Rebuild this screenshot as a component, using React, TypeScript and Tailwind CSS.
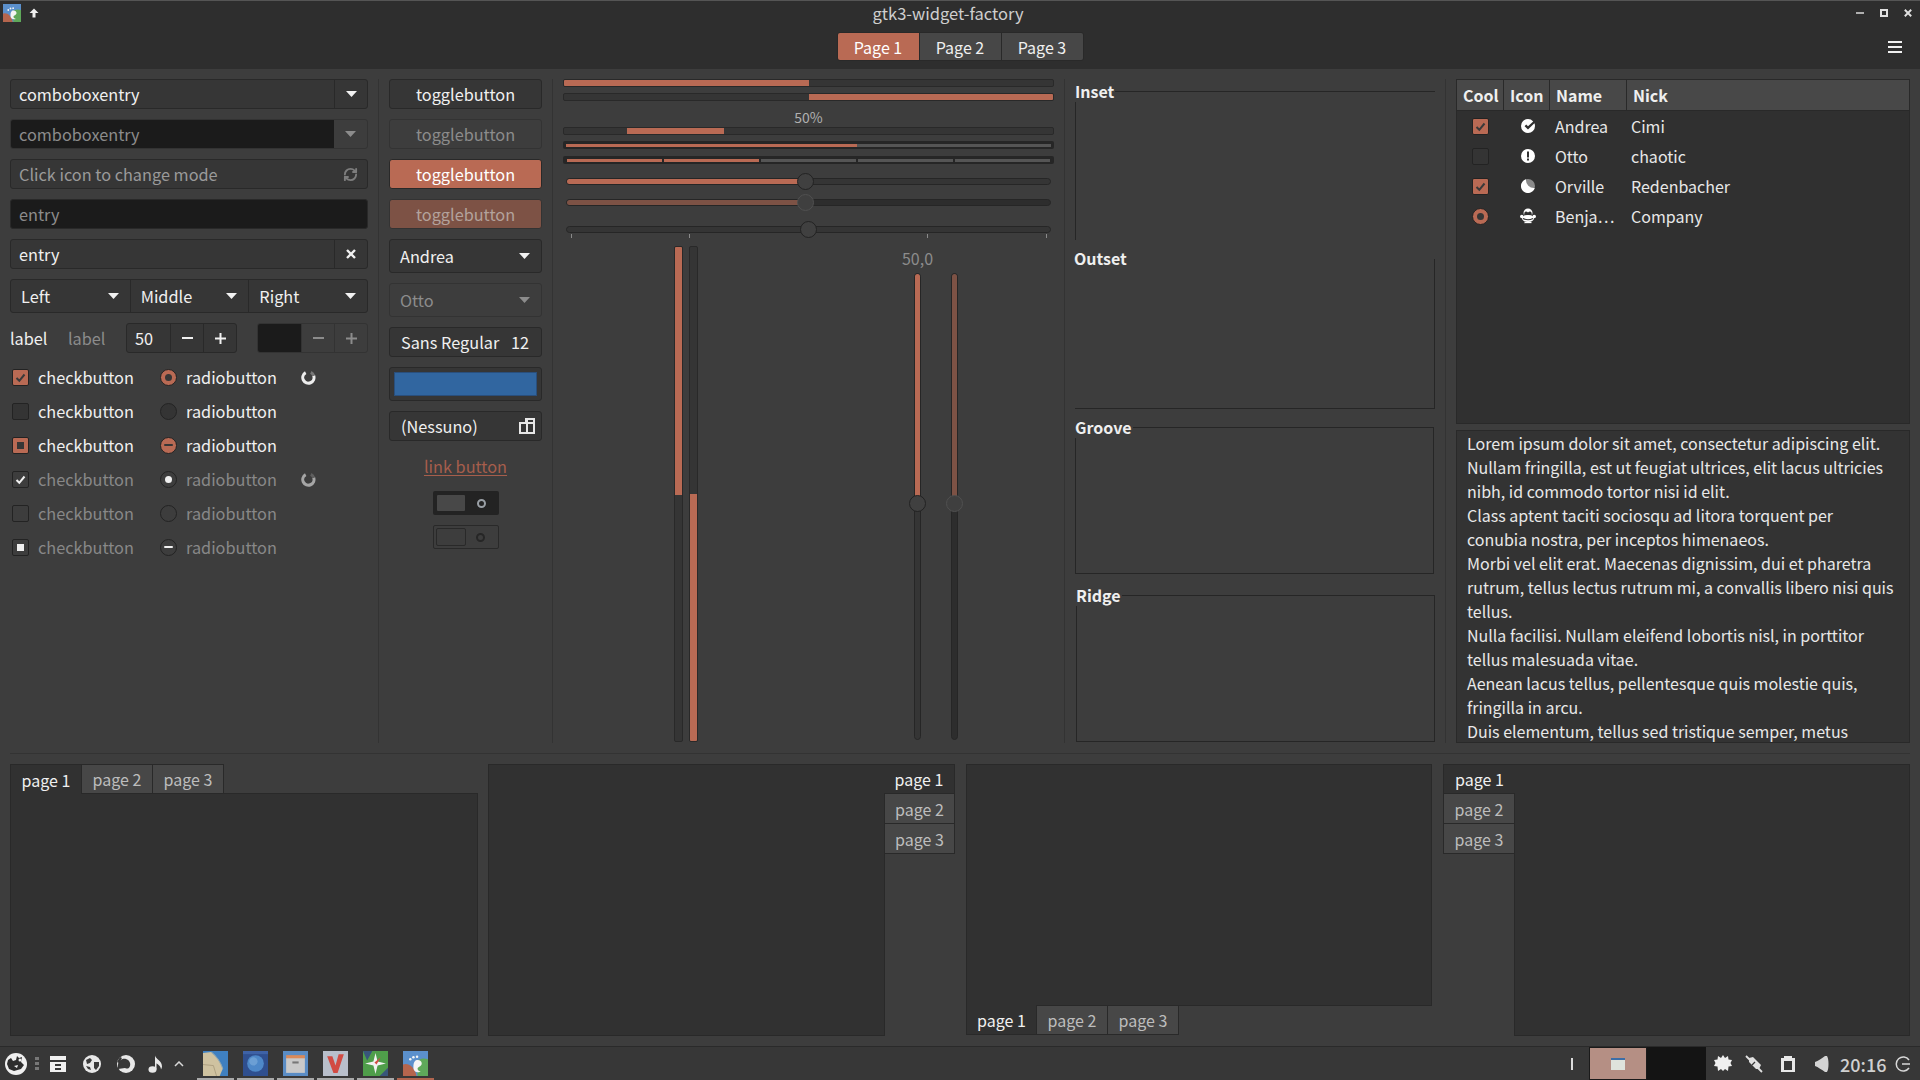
import React from 'react';
import { RefreshCw } from 'lucide-react';

const accent = 'bg-[#b96a54]';

const Arrow = ({ dim }: { dim?: boolean }) => (
  <svg viewBox="0 0 11 6" className="w-[11px] h-[6px]">
    <path d="M0 0h11L5.5 6z" fill={dim ? '#8c8c8c' : '#f2f2f2'} />
  </svg>
);

const Cross = ({ size = 10 }: { size?: number }) => (
  <svg width={size} height={size} viewBox="0 0 10 10">
    <path d="M1 1l8 8M9 1l-8 8" stroke="currentColor" strokeWidth="2.400" fill="none" />
  </svg>
);

const MinusMark = ({ size = 11 }: { size?: number }) => (
  <svg width={size} height="2" viewBox="0 0 11 2">
    <rect width="11" height="2" fill="currentColor" />
  </svg>
);

const PlusMark = () => (
  <svg width="11" height="11" viewBox="0 0 11 11">
    <path d="M0 4.500h11v2H0zM4.500 0h2v11h-2z" fill="currentColor" />
  </svg>
);

const Check = ({ color = '#3a3a3a' }: { color?: string }) => (
  <svg viewBox="0 0 17 17" className="w-[17px] h-[17px]">
    <path d="M4.500 9l2.800 2.800L12.500 5.500" fill="none" stroke={color} strokeWidth="2" />
  </svg>
);

type Mark = 'on' | 'off' | 'mixed';

const CheckBox = ({ mark, off }: { mark: Mark; off?: boolean }) => {
  if (off) {
    return (
      <div className="w-[17px] h-[17px] rounded-[2px] border border-[#232323] bg-[#3d3d3d] flex items-center justify-center overflow-hidden">
        {mark === 'on' && <div className="shrink-0"><Check color="#f0f0f0" /></div>}
        {mark === 'mixed' && <div className="w-[7px] h-[7px] bg-[#f0f0f0]" />}
      </div>
    );
  }
  return (
    <div className={`w-[17px] h-[17px] rounded-[2px] border border-[#232323] flex items-center justify-center overflow-hidden ${mark === 'off' ? 'bg-[#343434]' : accent}`}>
      {mark === 'on' && <div className="shrink-0"><Check /></div>}
      {mark === 'mixed' && <div className="w-[7px] h-[7px] bg-[#363636]" />}
    </div>
  );
};

const Radio = ({ mark, off }: { mark: Mark; off?: boolean }) => {
  const fill = off ? 'bg-[#3d3d3d]' : mark === 'off' ? 'bg-[#343434]' : accent;
  const dot = off ? 'bg-[#f0f0f0]' : 'bg-[#363636]';
  return (
    <div className={`w-[17px] h-[17px] rounded-full border border-[#232323] flex items-center justify-center ${fill}`}>
      {mark === 'on' && <div className={`w-[7px] h-[7px] rounded-full ${dot}`} />}
      {mark === 'mixed' && <div className={`w-[9px] h-[2px] rounded-[1px] ${dot}`} />}
    </div>
  );
};

const Spinner = () => (
  <svg viewBox="0 0 16 16" className="w-[15px] h-[15px]">
    <path d="M13.500 6A6 6 0 1 1 5 2.800" fill="none" stroke="#ededed" strokeWidth="3.200" />
    <path d="M10.500 2.500a6 6 0 0 1 3 3.500" fill="none" stroke="#777777" strokeWidth="3.200" />
  </svg>
);

const CheckRow = ({ c, r, off, spin }: { c: Mark; r: Mark; off?: boolean; spin?: boolean }) => (
  <div className={`grid grid-cols-[150px_131px_auto] h-[34px] items-center ${off ? 'text-[#888888]' : ''}`}>
    <div className="flex items-center pl-[2px] gap-[9px]">
      <CheckBox mark={c} off={off} />
      <span>checkbutton</span>
    </div>
    <div className="flex items-center gap-[9px]">
      <Radio mark={r} off={off} />
      <span>radiobutton</span>
    </div>
    <div className={`pl-[10px] ${off ? 'opacity-60' : ''}`}>{spin && <Spinner />}</div>
  </div>
);

const Toggle = ({ cls }: { cls: string }) => (
  <div className={`h-[30px] rounded-[3px] border flex items-center justify-center ${cls}`}>togglebutton</div>
);

const Bar = ({ children }: { children?: React.ReactNode }) => (
  <div className="flex h-[8px] rounded-[2px] border border-[#292929] bg-[#353535] overflow-hidden">{children}</div>
);

const HSlider = ({ knob, fill, off }: { knob?: string; fill?: string; off?: boolean }) => (
  <div className={`relative h-[7px] mx-[3px] rounded-full border border-[#262626] ${off ? 'bg-[#2d2d2d]' : 'bg-[#353535]'}`}>
    {fill && <div className={`h-full rounded-l-full ${fill} ${off ? 'bg-[#7d5245]' : accent}`} />}
    <div className={`absolute top-[-6px] w-[17px] h-[17px] rounded-full border ${knob} ${off ? 'bg-[#3f3f3f] border-[#505050]' : 'bg-[#404040] border-[#222222]'}`} />
  </div>
);

const Frame = ({ label, cls }: { label: string; cls: string }) => (
  <div className={`relative border-[#262626] ${cls}`}>
    <div className="absolute left-[-1px] top-[-12px] pr-[1px] h-[22px] leading-[22px] bg-[#3d3d3d] font-semibold text-[#efefef]">{label}</div>
  </div>
);

const Tab = ({ label, active, cls, w = 'w-[71px]' }: { label: string; active?: boolean; cls?: string; w?: string }) => (
  <div className={`${w} h-[30px] flex items-center justify-center border-[#292929] ${active ? 'bg-[#313131] text-[#f0f0f0]' : 'bg-[#474747] text-[#bdbdbd]'} ${cls ?? ''}`}>
    {label}
  </div>
);

const GimpIcon = ({ size }: { size: number }) => (
  <svg width={size} height={size} viewBox="0 0 24 24">
    <rect width="24" height="24" fill="#5b90cc" />
    <path d="M0 24V13c5-2 11 2 13 11z" fill="#b5654d" />
    <path d="M24 24V8C19 6 13 8 11 13c2 3 3 7 3 11z" fill="#5fa85a" />
    <path d="M12 9c3-1 6 0 6 3 0 3-4 3-4 5 0 2 2 2 3 3-3 1-7 0-7-4 0-3 0-5 2-7z" fill="#f4f4f4" />
    <circle cx="7" cy="8" r="1.200" fill="#f4f4f4" />
    <circle cx="10" cy="6" r="1.200" fill="#f4f4f4" />
    <circle cx="13.500" cy="5.500" r="1.200" fill="#f4f4f4" />
  </svg>
);

const MapIcon = () => (
  <svg width="25" height="25" viewBox="0 0 24 24">
    <rect width="24" height="24" fill="#3f80c0" />
    <path d="M0 2l8-1c5 4 9 10 11 16l-3 7H2L0 24z" fill="#cfc2a0" />
    <path d="M8 1c5 4 9 10 11 16" fill="none" stroke="#8fa6b0" strokeWidth="1" />
    <path d="M0 13l10 1 3 10" fill="none" stroke="#a89a7c" strokeWidth="0.800" />
  </svg>
);

const OrbIcon = () => (
  <svg width="25" height="25" viewBox="0 0 24 24">
    <rect width="24" height="24" fill="#2f4f8f" />
    <rect width="24" height="3" fill="#3e62a6" />
    <circle cx="12" cy="12" r="8" fill="#4e88c8" />
    <circle cx="10" cy="10" r="4" fill="#79a9d8" opacity="0.700" />
  </svg>
);

const BoxIcon = () => (
  <svg width="25" height="25" viewBox="0 0 24 24">
    <rect width="24" height="24" fill="#5a8cc4" />
    <rect x="3" y="4" width="18" height="4" fill="#d98a5a" />
    <rect x="3" y="7" width="18" height="14" fill="#c9c9c9" />
    <rect x="9" y="10" width="6" height="2" fill="#777777" />
  </svg>
);

const VIcon = () => (
  <svg width="25" height="25" viewBox="0 0 24 24">
    <rect width="24" height="24" fill="#b9bfcb" />
    <path d="M4 5h5l3 9 3-11h5l-6 18h-4z" fill="#d24b43" />
  </svg>
);

const CompassIcon = () => (
  <svg width="25" height="25" viewBox="0 0 24 24">
    <rect width="24" height="24" fill="#4f9e4a" />
    <path d="M0 0h9L4 9zM24 24h-8l8-8z" fill="#38567a" />
    <path d="M12 2l2 8 8 2-8 2-2 8-2-8-8-2 8-2z" fill="#f2f2f2" />
    <path d="M17 6l-6 5 2 2z" fill="#d24b43" />
  </svg>
);

const tasks = [
  { icon: <MapIcon />, bar: 'bg-[#a9a9a9]' },
  { icon: <OrbIcon />, bar: 'bg-[#a9a9a9]' },
  { icon: <BoxIcon />, bar: 'bg-[#a9a9a9]' },
  { icon: <VIcon />, bar: 'bg-[#a9a9a9]' },
  { icon: <CompassIcon />, bar: 'bg-[#a9a9a9]' },
  { icon: <GimpIcon size={25} />, bar: 'bg-[#b0654f]' },
];

const lorem = [
  'Lorem ipsum dolor sit amet, consectetur adipiscing elit.',
  'Nullam fringilla, est ut feugiat ultrices, elit lacus ultricies',
  'nibh, id commodo tortor nisi id elit.',
  'Class aptent taciti sociosqu ad litora torquent per',
  'conubia nostra, per inceptos himenaeos.',
  'Morbi vel elit erat. Maecenas dignissim, dui et pharetra',
  'rutrum, tellus lectus rutrum mi, a convallis libero nisi quis',
  'tellus.',
  'Nulla facilisi. Nullam eleifend lobortis nisl, in porttitor',
  'tellus malesuada vitae.',
  'Aenean lacus tellus, pellentesque quis molestie quis,',
  'fringilla in arcu.',
  'Duis elementum, tellus sed tristique semper, metus',
];

const treeRows = [
  {
    cool: <CheckBox mark="on" />,
    icon: <path fillRule="evenodd" d="M8 1a7 7 0 1 0 7 7 7 7 0 0 0-.6-2.800L8 11.500 4.600 8.200l1.600-1.600L8 8.300 13.200 3.400A7 7 0 0 0 8 1z" fill="#fff" />,
    name: 'Andrea',
    nick: 'Cimi',
  },
  {
    cool: <CheckBox mark="off" />,
    icon: <path fillRule="evenodd" d="M8 1a7 7 0 1 0 0 14A7 7 0 0 0 8 1zM7 3.500h2V9.500H7zM7 10.500h2v2H7z" fill="#fff" />,
    name: 'Otto',
    nick: 'chaotic',
  },
  {
    cool: <CheckBox mark="on" />,
    icon: (
      <>
        <circle cx="8" cy="8" r="7" fill="#8a8a8a" />
        <path d="M6 1.300A7 7 0 1 0 14.700 10 8 8 0 0 1 6 1.300z" fill="#fff" />
      </>
    ),
    name: 'Orville',
    nick: 'Redenbacher',
  },
  {
    cool: <Radio mark="on" />,
    icon: (
      <>
        <circle cx="8" cy="5" r="4.500" fill="#fff" />
        <circle cx="1.800" cy="8.500" r="1.800" fill="#fff" />
        <circle cx="14.200" cy="8.500" r="1.800" fill="#fff" />
        <path d="M4.500 4.500c1-1.500 2.500-.8 3.500 0 1-.8 2.500-1.500 3.500 0l.5 3h-8z" fill="#303030" />
        <ellipse cx="8" cy="10.500" rx="6" ry="3.500" fill="#fff" />
        <path d="M3 10.500c3 1.500 7 1.500 10 0" fill="none" stroke="#303030" strokeWidth="1.100" />
        <path d="M4.500 14.500h7" stroke="#fff" strokeWidth="1.300" />
      </>
    ),
    name: 'Benja⋯',
    nick: 'Company',
  },
];

export default function App() {
  return (
    <div className="w-[1920px] h-[1080px] overflow-hidden flex flex-col bg-[#3d3d3d] text-[#f0f0f0] text-[16px] font-['Noto_Sans_CJK_SC','Noto_Sans',sans-serif]">
      {/* title bar + switcher */}
      <div className="h-[69px] shrink-0 bg-[#2e2e2e] border-t border-[#555555]">
        <div className="h-[24px] grid grid-cols-[1fr_auto_1fr] items-center">
          <div className="flex items-center pl-[3px] gap-[8px]">
            <GimpIcon size={18} />
            <svg viewBox="0 0 10 10" className="w-[10px] h-[10px]">
              <path d="M5 0.500L9.500 5H6.500V9.500H3.500V5H0.500z" fill="#f0f0f0" />
            </svg>
          </div>
          <div className="mr-[24px] text-[16.500px] text-[#cfcfcf] leading-[24px]">gtk3-widget-factory</div>
          <div className="flex justify-end items-center pr-[8px] gap-[16px] text-[#e0e0e0]">
            <MinusMark size={8} />
            <div className="w-[8px] h-[8px] border-2 border-[#e0e0e0]" />
            <Cross size={8} />
          </div>
        </div>
        <div className="h-[44px] grid grid-cols-[1fr_auto_1fr] items-start pt-[7px]">
          <div />
          <div className="flex h-[29px] rounded-[3px] border border-[#292929] overflow-hidden">
            <div className={`w-[81px] flex items-center justify-center ${accent} text-white`}>Page 1</div>
            <div className="w-[82px] flex items-center justify-center bg-[#474747] border-l border-[#292929]">Page 2</div>
            <div className="w-[82px] flex items-center justify-center bg-[#474747] border-l border-[#292929]">Page 3</div>
          </div>
          <div className="flex justify-end pr-[18px] pt-[9px]">
            <div className="w-[14px] h-[12px] flex flex-col justify-between">
              <div className="h-[2px] bg-[#f0f0f0]" />
              <div className="h-[2px] bg-[#f0f0f0]" />
              <div className="h-[2px] bg-[#f0f0f0]" />
            </div>
          </div>
        </div>
      </div>

      <div className="flex-1 flex flex-col px-[10px] pt-[10px] pb-[10px]">
        {/* widget columns */}
        <div className="h-[664px] flex gap-[10px]">
          {/* entries */}
          <div className="w-[358px] shrink-0 flex flex-col gap-[10px] text-[16.300px]">
            <div className="h-[30px] rounded-[3px] border border-[#292929] bg-[#363636] flex items-center leading-none">
              <div className="flex-1 pl-[8px]">comboboxentry</div>
              <div className="w-[33px] h-full border-l border-[#292929] flex items-center justify-center"><Arrow /></div>
            </div>
            <div className="h-[30px] rounded-[3px] border border-[#333333] bg-[#3d3d3d] flex items-center overflow-hidden text-[#8c8c8c]">
              <div className="flex-1 h-full pl-[8px] bg-[#1b1b1b] flex items-center">comboboxentry</div>
              <div className="w-[33px] flex items-center justify-center"><Arrow dim /></div>
            </div>
            <div className="h-[30px] rounded-[3px] border border-[#292929] bg-[#363636] flex items-center text-[#9a9a9a]">
              <div className="flex-1 pl-[8px]">Click icon to change mode</div>
              <div className="w-[33px] flex items-center justify-center text-[#7d7d7d]"><RefreshCw size={15} strokeWidth={3} /></div>
            </div>
            <div className="h-[30px] rounded-[3px] border border-[#292929] bg-[#1b1b1b] flex items-center pl-[8px] text-[#8c8c8c]">entry</div>
            <div className="h-[30px] rounded-[3px] border border-[#292929] bg-[#363636] flex items-center">
              <div className="flex-1 pl-[8px]">entry</div>
              <div className="w-[33px] h-full border-l border-[#292929] flex items-center justify-center"><Cross /></div>
            </div>
            <div className="h-[34px] rounded-[3px] border border-[#292929] bg-[#363636] grid grid-cols-3">
              {['Left', 'Middle', 'Right'].map((t, i) => (
                <div key={t} className={`flex items-center justify-between pl-[10px] pr-[11px] border-[#292929] ${i > 0 ? 'border-l' : ''}`}>
                  <span>{t}</span>
                  <Arrow />
                </div>
              ))}
            </div>
            <div className="h-[30px] flex items-center">
              <div className="w-[58px]">label</div>
              <div className="w-[58px] text-[#8c8c8c]">label</div>
              <div className="w-[111px] h-full rounded-[3px] border border-[#292929] bg-[#363636] flex items-center">
                <div className="flex-1 pl-[8px]">50</div>
                <div className="w-[33px] h-full border-l border-[#292929] flex items-center justify-center"><MinusMark /></div>
                <div className="w-[33px] h-full border-l border-[#292929] flex items-center justify-center"><PlusMark /></div>
              </div>
              <div className="w-[111px] h-full ml-[20px] rounded-[3px] border border-[#333333] bg-[#3d3d3d] flex items-center overflow-hidden text-[#8c8c8c]">
                <div className="flex-1 h-full bg-[#1b1b1b]" />
                <div className="w-[33px] h-full border-l border-[#333333] flex items-center justify-center"><MinusMark /></div>
                <div className="w-[33px] h-full border-l border-[#333333] flex items-center justify-center"><PlusMark /></div>
              </div>
            </div>
            <div className="mt-[-3px]">
              <CheckRow c="on" r="on" spin />
              <CheckRow c="off" r="off" />
              <CheckRow c="mixed" r="mixed" />
              <CheckRow c="on" r="on" off spin />
              <CheckRow c="off" r="off" off />
              <CheckRow c="mixed" r="mixed" off />
            </div>
          </div>

          <div className="w-px bg-[#333333]" />

          {/* buttons */}
          <div className="w-[153px] shrink-0 flex flex-col gap-[10px] text-[16.300px]">
            <Toggle cls="border-[#292929] bg-[#363636]" />
            <Toggle cls="border-[#333333] bg-[#3d3d3d] text-[#8c8c8c]" />
            <Toggle cls={`border-[#292929] ${accent} text-white`} />
            <Toggle cls="border-[#333333] bg-[#7d5245] text-[#b3a29c]" />
            <div className="h-[34px] rounded-[3px] border border-[#292929] bg-[#363636] flex items-center justify-between pl-[10px] pr-[11px]">
              <span>Andrea</span>
              <Arrow />
            </div>
            <div className="h-[34px] rounded-[3px] border border-[#333333] bg-[#3d3d3d] text-[#8c8c8c] flex items-center justify-between pl-[10px] pr-[11px]">
              <span>Otto</span>
              <Arrow dim />
            </div>
            <div className="h-[30px] rounded-[3px] border border-[#292929] bg-[#363636] flex items-center justify-between pl-[11px] pr-[12px]">
              <span>Sans Regular</span>
              <span>12</span>
            </div>
            <div className="h-[34px] rounded-[3px] border border-[#292929] bg-[#363636] p-[4px]">
              <div className="h-full bg-[#3166a0] border border-[#2a4f7c]" />
            </div>
            <div className="h-[30px] rounded-[3px] border border-[#292929] bg-[#363636] flex items-center justify-between pl-[11px] pr-[6px]">
              <span>(Nessuno)</span>
              <svg viewBox="0 0 16 16" className="w-[16px] h-[16px]">
                <path fillRule="evenodd" d="M6 0h10v16H0V4h6zM9 2v2h5V2zM2 6v8h5V6zM9 6v8h5V6z" fill="#e8e8e8" />
              </svg>
            </div>
            <div className="h-[30px] flex items-center justify-center text-[#a65e4c] underline underline-offset-2">link button</div>
            <div className="h-[24px] w-[66px] mx-auto rounded-[2px] bg-[#232323] flex items-center pl-[4px]">
              <div className="w-[28px] h-[16px] rounded-[1px] bg-[#484848]" />
              <div className="ml-[12px] w-[9px] h-[9px] rounded-full border-2 border-[#9aa0a6]" />
            </div>
            <div className="h-[24px] w-[66px] mx-auto rounded-[2px] border border-[#292929] bg-[#3d3d3d] flex items-center pl-[2px]">
              <div className="w-[30px] h-[18px] rounded-[2px] border border-[#292929] bg-[#3d3d3d]" />
              <div className="ml-[10px] w-[9px] h-[9px] rounded-full border-2 border-[#262626]" />
            </div>
          </div>

          <div className="w-px bg-[#333333]" />

          {/* progress bars and scales */}
          <div className="w-[491px] shrink-0 flex flex-col">
            <Bar><div className={`w-[245px] ${accent}`} /></Bar>
            <div className="mt-[6px]"><Bar><div className="w-[245px]" /><div className={`flex-1 ${accent}`} /></Bar></div>
            <div className="h-[26px] flex items-end justify-center pb-px text-[14px] leading-[18px] text-[#b0b0b0]">50%</div>
            <Bar><div className="w-[63px]" /><div className={`w-[97px] ${accent}`} /></Bar>
            <div className="mt-[6px] h-[8px] rounded-[2px] bg-[#262626] px-[3px] pt-[3px] pb-[2px] flex">
              <div className={`w-[291px] ${accent}`} />
              <div className="flex-1 bg-[#555555]" />
            </div>
            <div className="mt-[7px] h-[8px] rounded-[2px] bg-[#262626] px-[4px] pt-[3px] pb-[2px] flex gap-[2px]">
              <div className={`flex-1 ${accent}`} />
              <div className={`flex-1 ${accent}`} />
              <div className="flex-1 bg-[#555555]" />
              <div className="flex-1 bg-[#555555]" />
              <div className="flex-1 bg-[#555555]" />
            </div>
            <div className="mt-[14px]"><HSlider fill="w-[232px]" knob="left-[230px]" /></div>
            <div className="mt-[14px]"><HSlider fill="w-[232px]" knob="left-[230px]" off /></div>
            <div className="mt-[20px]"><HSlider knob="left-[233px]" /></div>
            <div className="h-[4px] mt-[1px] flex">
              <div className="w-px bg-[#8a8a8a] ml-[8px]" />
              <div className="w-px bg-[#8a8a8a] ml-[117px]" />
              <div className="w-px bg-[#8a8a8a] ml-[237px]" />
              <div className="w-px bg-[#8a8a8a] ml-[118px]" />
            </div>
            <div className="mt-[8px] h-[496px] flex">
              <div className="ml-[111px] w-[9px] h-full rounded-[2px] border border-[#292929] bg-[#353535] overflow-hidden">
                <div className={`h-[248px] ${accent}`} />
              </div>
              <div className="ml-[6px] w-[9px] h-full rounded-[2px] border border-[#292929] bg-[#353535] overflow-hidden flex flex-col justify-end">
                <div className={`h-[247px] ${accent}`} />
              </div>
              <div className="ml-[216px] w-[7px] h-full flex flex-col items-center">
                <div className="h-[27px] pb-[3px] flex items-center justify-center whitespace-nowrap text-[#8c8c8c] leading-none">50,0</div>
                <div className="relative w-[7px] h-[467px] rounded-full border border-[#262626] bg-[#353535]">
                  <div className={`w-full h-[230px] rounded-t-full ${accent}`} />
                  <div className="absolute left-[-6px] top-[221px] w-[17px] h-[17px] rounded-full border border-[#222222] bg-[#404040]" />
                </div>
              </div>
              <div className="ml-[30px] w-[7px] h-full flex flex-col items-center">
                <div className="h-[27px]" />
                <div className="relative w-[7px] h-[467px] rounded-full border border-[#262626] bg-[#2d2d2d]">
                  <div className="w-full h-[230px] rounded-t-full bg-[#7d5245]" />
                  <div className="absolute left-[-6px] top-[221px] w-[17px] h-[17px] rounded-full border border-[#505050] bg-[#3f3f3f]" />
                </div>
              </div>
            </div>
          </div>

          <div className="w-px bg-[#333333]" />

          {/* frames */}
          <div className="w-[360px] shrink-0 flex flex-col">
            <Frame label="Inset" cls="mt-[12px] h-[149px] border-t border-l" />
            <Frame label="Outset" cls="mt-[19px] h-[150px] border-r border-b" />
            <Frame label="Groove" cls="mt-[18px] h-[147px] border mr-px" />
            <Frame label="Ridge" cls="mt-[21px] h-[147px] border ml-px" />
          </div>

          <div className="w-px bg-[#333333]" />

          {/* tree and text */}
          <div className="flex-1 min-w-0 flex flex-col gap-[6px]">
            <div className="h-[345px] border border-[#292929] bg-[#303030]">
              <div className="grid grid-cols-[47px_46px_77px_1fr] h-[31px] bg-[#484848] border-b border-[#292929] font-semibold text-[#efefef]">
                {['Cool', 'Icon', 'Name', 'Nick'].map((h, i) => (
                  <div key={h} className={`flex items-center pl-[6px] border-[#292929] ${i < 3 ? 'border-r' : ''}`}>{h}</div>
                ))}
              </div>
              {treeRows.map(row => (
                <div key={row.nick} className="grid grid-cols-[47px_46px_77px_1fr] h-[30px] items-center">
                  <div className="flex justify-center">{row.cool}</div>
                  <div className="flex justify-center pl-px">
                    <svg viewBox="0 0 16 16" className="w-[16px] h-[16px]">{row.icon}</svg>
                  </div>
                  <div className="pl-[5px] text-[#e8e8e8]">{row.name}</div>
                  <div className="pl-[4px] text-[#e8e8e8]">{row.nick}</div>
                </div>
              ))}
            </div>
            <div className="flex-1 min-h-0 overflow-hidden border border-[#292929] bg-[#333333] pl-[10px] text-[#e8e8e8] leading-[24px]">
              {lorem.map(line => (
                <div key={line} className="h-[24px] whitespace-nowrap">{line}</div>
              ))}
            </div>
          </div>
        </div>

        <div className="h-px mt-[10px] bg-[#333333]" />

        {/* notebooks */}
        <div className="mt-[10px] flex-1 min-h-0 flex">
          <div className="w-[468px] flex flex-col">
            <div className="flex mb-[-1px] relative z-10">
              <Tab label="page 1" active cls="border border-b-0" w="w-[72px]" />
              <Tab label="page 2" cls="border-t border-r border-b" />
              <Tab label="page 3" cls="border-t border-r border-b" />
            </div>
            <div className="flex-1 border border-[#292929] bg-[#313131]" />
          </div>
          <div className="ml-[10px] w-[467px] flex">
            <div className="flex-1 border border-[#292929] bg-[#313131]" />
            <div className="flex flex-col ml-[-1px] relative z-10">
              <Tab label="page 1" active cls="border border-l-0" />
              <Tab label="page 2" cls="border-l border-r border-b" />
              <Tab label="page 3" cls="border-l border-r border-b" />
            </div>
          </div>
          <div className="ml-[11px] w-[466px] flex flex-col">
            <div className="flex-1 border border-[#292929] bg-[#313131]" />
            <div className="flex mt-[-1px] mb-[1px] relative z-10">
              <Tab label="page 1" active cls="border border-t-0" />
              <Tab label="page 2" cls="border-t border-r border-b" />
              <Tab label="page 3" cls="border-t border-r border-b" />
            </div>
          </div>
          <div className="ml-[11px] flex-1 min-w-0 flex">
            <div className="flex flex-col mr-[-1px] relative z-10">
              <Tab label="page 1" active cls="border border-r-0" w="w-[72px]" />
              <Tab label="page 2" cls="border-l border-r border-b" w="w-[72px]" />
              <Tab label="page 3" cls="border-l border-r border-b" w="w-[72px]" />
            </div>
            <div className="flex-1 border border-[#292929] bg-[#313131]" />
          </div>
        </div>
      </div>

      {/* panel */}
      <div className="h-[34px] shrink-0 border-t border-[#2a2a2a] bg-[#373737] flex items-stretch">
        <div className="flex items-center pl-[5px]">
          <svg viewBox="0 0 22 22" className="w-[22px] h-[22px]">
            <circle cx="11" cy="11" r="11" fill="#f0f0f0" />
            <path d="M3 7l3-2 2 3 3-1 1-4 2 2 3-1-1 5 3 3-3 4-7 2-5-2-2-5z" fill="#2e2e2e" />
            <path d="M9 13l4-1-1 3z" fill="#f0f0f0" />
            <circle cx="15" cy="7" r="1.500" fill="#f0f0f0" />
          </svg>
          <div className="ml-[8px] flex flex-col gap-[2px]">
            <div className="w-[4px] h-[3px] bg-[#777777]" />
            <div className="w-[4px] h-[3px] bg-[#777777]" />
            <div className="w-[4px] h-[3px] bg-[#777777]" />
          </div>
          <svg viewBox="0 0 18 18" className="ml-[10px] w-[18px] h-[18px]">
            <path fillRule="evenodd" d="M1 1h16v4H1zM1 7h16v10H1zM6 9v2h6V9zM6 13v2h6v-2z" fill="#f0f0f0" />
          </svg>
          <svg viewBox="0 0 18 18" className="ml-[16px] w-[18px] h-[18px]">
            <circle cx="9" cy="9" r="9" fill="#e8e8e8" />
            <path d="M3 5l4-2 2 2-2 3-3 1zM11 7l5 0 0 4-3 4-2-2zM3 11l4 1 1 3-3-1z" fill="#3a3a3a" />
          </svg>
          <svg viewBox="0 0 18 18" className="ml-[16px] w-[18px] h-[18px]">
            <circle cx="9" cy="9" r="9" fill="#e8e8e8" />
            <path d="M1 10c0-4 4-7 8-6 3 1 5 4 4 7-1 3-3 3-5 2l-7 1z" fill="#373737" />
            <path d="M0 7l3-5 2 1-3 5z" fill="#373737" />
          </svg>
          <svg viewBox="0 0 18 18" className="ml-[13px] w-[18px] h-[18px]">
            <ellipse cx="4.500" cy="14.500" rx="4" ry="3.200" fill="#e8e8e8" />
            <path d="M7 14.500V0.500c1 4 7 5 7 11 0 1-.5 2-1 3 0-3.500-4-6-4.500-6v6z" fill="#e8e8e8" />
          </svg>
          <svg viewBox="0 0 10 6" className="ml-[8px] w-[10px] h-[6px]">
            <path d="M1 5l4-4 4 4" fill="none" stroke="#d8d8d8" strokeWidth="1.500" />
          </svg>
        </div>
        <div className="ml-[13px] flex gap-[3px]">
          {tasks.map((t, i) => (
            <div key={i} className="w-[37px] flex flex-col items-center pt-[4px]">
              {t.icon}
              <div className={`mt-[2px] h-[2px] w-full ${t.bar}`} />
            </div>
          ))}
        </div>
        <div className="ml-auto flex items-center pr-[9px]">
          <div className="w-[2px] h-[12px] bg-[#dcdcdc]" />
          <div className="ml-[16px] w-[58px] self-stretch bg-[#b58f84] border border-[#1a1a1a] flex items-center justify-center">
            <div className="w-[14px] h-[12px] bg-[#dfe3dc] border-t-2 border-[#3c6ea8]" />
          </div>
          <div className="w-[59px] self-stretch bg-[#141414]" />
          <svg viewBox="0 0 18 18" className="ml-[8px] w-[18px] h-[18px]">
            <path d="M9 0l2 3 3-2 .5 3.500L18 5l-1.500 3L18 11l-3.500.5L14 16l-3-2-2 2-2-2-3 2-.5-4.500L0 11l1.500-3L0 5l3.500-.5L4 1l3 2z" fill="#f0f0f0" />
          </svg>
          <svg viewBox="0 0 18 18" className="ml-[13px] w-[18px] h-[18px]">
            <path d="M1 1l4 4M13 13l4 4" stroke="#e0e0e0" strokeWidth="1.800" />
            <path d="M4 3l4-1 8 8-2 4-3 0-7-7z" fill="#e0e0e0" />
            <path d="M7 10l3-3" stroke="#373737" strokeWidth="1.200" />
          </svg>
          <svg viewBox="0 0 16 18" className="ml-[17px] w-[16px] h-[18px]">
            <path fillRule="evenodd" d="M4 1h8v2h3v14H1V3h3zM4 6v9h8V6z" fill="#e8e8e8" />
          </svg>
          <svg viewBox="0 0 16 18" className="ml-[18px] w-[16px] h-[18px]">
            <path d="M1 7c3-1 7-4 10-6h2c2 3 2 13 0 16h-2C8 15 4 12 1 11z" fill="#d4d4d4" />
          </svg>
          <div className="ml-[10px] w-[44px] text-[18px] font-medium text-[#d0d0d0] leading-none whitespace-nowrap">20:16</div>
          <svg viewBox="0 0 16 16" className="ml-[11px] w-[16px] h-[16px]">
            <path d="M14 4A7 7 0 1 0 14 12M7 8h8" fill="none" stroke="#d8d8d8" strokeWidth="1.500" />
          </svg>
        </div>
      </div>
    </div>
  );
}
